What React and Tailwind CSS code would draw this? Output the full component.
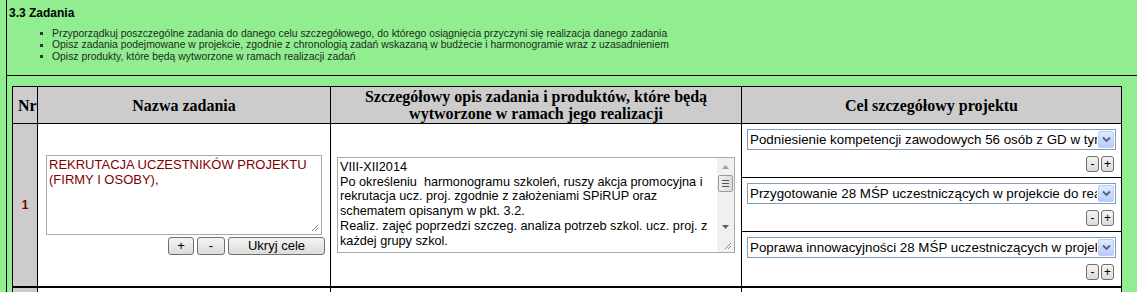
import React from "react";

const sans = "font-['Liberation_Sans',Arial,sans-serif]";
const serif = "font-['Liberation_Serif','Times_New_Roman',serif]";

const hints = [
  "Przyporządkuj poszczególne zadania do danego celu szczegółowego, do którego osiągnięcia przyczyni się realizacja danego zadania",
  "Opisz zadania podejmowane w projekcie, zgodnie z chronologią zadań wskazaną w budżecie i harmonogramie wraz z uzasadnieniem",
  "Opisz produkty, które będą wytworzone w ramach realizacji zadań",
];

const goals = [
  "Podniesienie kompetencji zawodowych 56 osób z GD w tym 28 osób kadry zarządzającej",
  "Przygotowanie 28 MŚP uczestniczących w projekcie do realizacji strategii rozwoju",
  "Poprawa innowacyjności 28 MŚP uczestniczących w projekcie poprzez szkolenia",
];

const opis = `VIII-XII2014
Po określeniu  harmonogramu szkoleń, ruszy akcja promocyjna i
rekrutacja ucz. proj. zgodnie z założeniami SPiRUP oraz
schematem opisanym w pkt. 3.2.
Realiz. zajęć poprzedzi szczeg. analiza potrzeb szkol. ucz. proj. z
każdej grupy szkol.`;

function Grip() {
  return (
    <svg width="10" height="10" viewBox="0 0 10 10" className="absolute right-[2px] bottom-[2px]">
      <path d="M9 3 L3 9 M9 6 L6 9" stroke="#8a8a8a" strokeWidth="1" />
    </svg>
  );
}

function Btn({ children, className = "" }) {
  return (
    <button
      className={`flex items-center justify-center border border-[#707070] rounded-[3px] bg-linear-to-b from-[#f4f4f4] to-[#dcdcdc] text-black ${className}`}
    >
      {children}
    </button>
  );
}

function Select({ text }) {
  return (
    <div className="flex h-[21px] w-[369px] border border-[#7f9db9] bg-white">
      <div className="flex-1 overflow-hidden whitespace-nowrap pl-[2px] text-[13.35px] leading-[19px] text-black">
        {text}
      </div>
      <div className="m-px flex w-[16px] items-center justify-center rounded-[2px] border border-[#bccdf8] bg-linear-to-b from-[#e2ebfe] to-[#b7cbf8]">
        <svg width="9" height="7" viewBox="0 0 9 7">
          <path d="M1 1.5 L4.5 5 L8 1.5" stroke="#4d6185" strokeWidth="1.8" fill="none" />
        </svg>
      </div>
    </div>
  );
}

function ScrollBar() {
  return (
    <div className="flex w-[17px] flex-col bg-[#f0f0f0]">
      <div className="flex h-[17px] items-center justify-center">
        <svg width="7" height="4" viewBox="0 0 7 4">
          <path d="M0 4 L3.5 0 L7 4 Z" fill="#a0a0a0" />
        </svg>
      </div>
      <div className="flex h-[43px] flex-col">
        <div className="mx-px flex h-[17px] flex-col items-center justify-center gap-[2px] rounded-[2px] border border-[#9a9a9a] bg-linear-to-r from-[#f0f0f0] to-[#dadada]">
          <div className="h-px w-[7px] bg-[#555]" />
          <div className="h-px w-[7px] bg-[#555]" />
          <div className="h-px w-[7px] bg-[#555]" />
        </div>
      </div>
      <div className="flex h-[17px] items-center justify-center">
        <svg width="7" height="4" viewBox="0 0 7 4">
          <path d="M0 0 L3.5 4 L7 0 Z" fill="#606060" />
        </svg>
      </div>
      <div className="relative h-[17px] bg-[#f0f0f0]">
        <Grip />
      </div>
    </div>
  );
}

function GoalRow({ text, last }) {
  return (
    <div className={`h-[54px] pl-[5px] pr-[7px] pt-[5px] ${last ? "" : "border-b border-black"}`}>
      <Select text={text} />
      <div className="mt-[6px] flex justify-end gap-[2px]">
        <Btn className="h-[16px] w-[13px] text-[12px] leading-none">-</Btn>
        <Btn className="h-[16px] w-[13px] text-[12px] leading-none">+</Btn>
      </div>
    </div>
  );
}

export default function App() {
  return (
    <div className={`h-[292px] w-[1137px] overflow-hidden bg-[#90ee90] ${sans}`}>
      <div className="ml-[6px] border-l border-black">
        {/* section header */}
        <div className="h-[75px] pl-[2px] pt-[6px]">
          <div className="text-[12px] font-bold leading-[14px] text-black">3.3 Zadania</div>
          <div className="mt-[8px]">
            {hints.map((h) => (
              <div key={h} className="flex h-[11.5px] items-center pl-[31px] text-[10.4px] text-[#1e2a1e]">
                <span className="h-[3px] w-[3px] bg-[#333]" />
                <span className="ml-[9px]">{h}</span>
              </div>
            ))}
          </div>
        </div>

        {/* tasks table */}
        <div className="border-t border-black pl-[5px] pt-[10px]">
          <table className="w-[1109px] table-fixed border-collapse">
            <colgroup>
              <col className="w-[25px]" />
              <col className="w-[293px]" />
              <col className="w-[411px]" />
              <col className="w-[380px]" />
            </colgroup>
            <thead>
              <tr className={`h-[37px] bg-[#cccccc] text-[16px] font-bold leading-[17px] text-black ${serif}`}>
                <th className="border border-black p-0">
                  <div className="overflow-hidden whitespace-nowrap pl-[5px] text-left">Nr</div>
                </th>
                <th className="border border-black p-px">Nazwa zadania</th>
                <th className="border border-black p-px">
                  Szczegółowy opis zadania i produktów, które będą
                  <br />
                  wytworzone w ramach jego realizacji
                </th>
                <th className="border border-black p-px">Cel szczegółowy projektu</th>
              </tr>
            </thead>
            <tbody>
              <tr className="h-[162px]">
                <td className="border border-black bg-[#cccccc] p-0 text-center align-middle text-[12px] font-bold text-[#800000]">
                  1
                </td>
                <td className="border border-black bg-white p-0 align-middle">
                  <div className="pl-[8px] pr-[5px]">
                    <div className="relative h-[80px] w-[276px] border border-[#a9a9a9] bg-white px-[2px] pt-px text-[13px] leading-[15px] text-[#800000]">
                      REKRUTACJA UCZESTNIKÓW PROJEKTU
                      <br />
                      (FIRMY I OSOBY),
                      <Grip />
                    </div>
                    <div className="mt-[2px] flex justify-end gap-[3px] text-[13px]">
                      <Btn className="h-[18px] w-[26px]">+</Btn>
                      <Btn className="h-[18px] w-[28px]">-</Btn>
                      <Btn className="h-[18px] w-[97px] text-[#333]">Ukryj cele</Btn>
                    </div>
                  </div>
                </td>
                <td className="border border-black bg-white p-0 align-middle">
                  <div className="pl-[6px]">
                    <div className="flex h-[96px] w-[398px] border border-[#a9a9a9] bg-white">
                      <div className="flex-1 overflow-hidden whitespace-pre px-[2px] pt-[2px] text-[12.7px] leading-[14.7px] text-black">
                        {opis}
                      </div>
                      <ScrollBar />
                    </div>
                  </div>
                </td>
                <td className="border border-black bg-white p-0 align-top">
                  {goals.map((g, i) => (
                    <GoalRow key={g} text={g} last={i === goals.length - 1} />
                  ))}
                </td>
              </tr>
              <tr className="h-[60px]">
                <td className="border border-t-2 border-black bg-[#cccccc] p-0" />
                <td className="border border-t-2 border-black bg-white p-0" />
                <td className="border border-t-2 border-black bg-white p-0" />
                <td className="border border-t-2 border-black bg-white p-0 align-top">
                  <div className="pl-[5px] pt-[5px]">
                    <Select text="Podniesienie kompetencji zawodowych 56 osób z GD w tym 28 osób" />
                  </div>
                </td>
              </tr>
            </tbody>
          </table>
        </div>
      </div>
    </div>
  );
}
